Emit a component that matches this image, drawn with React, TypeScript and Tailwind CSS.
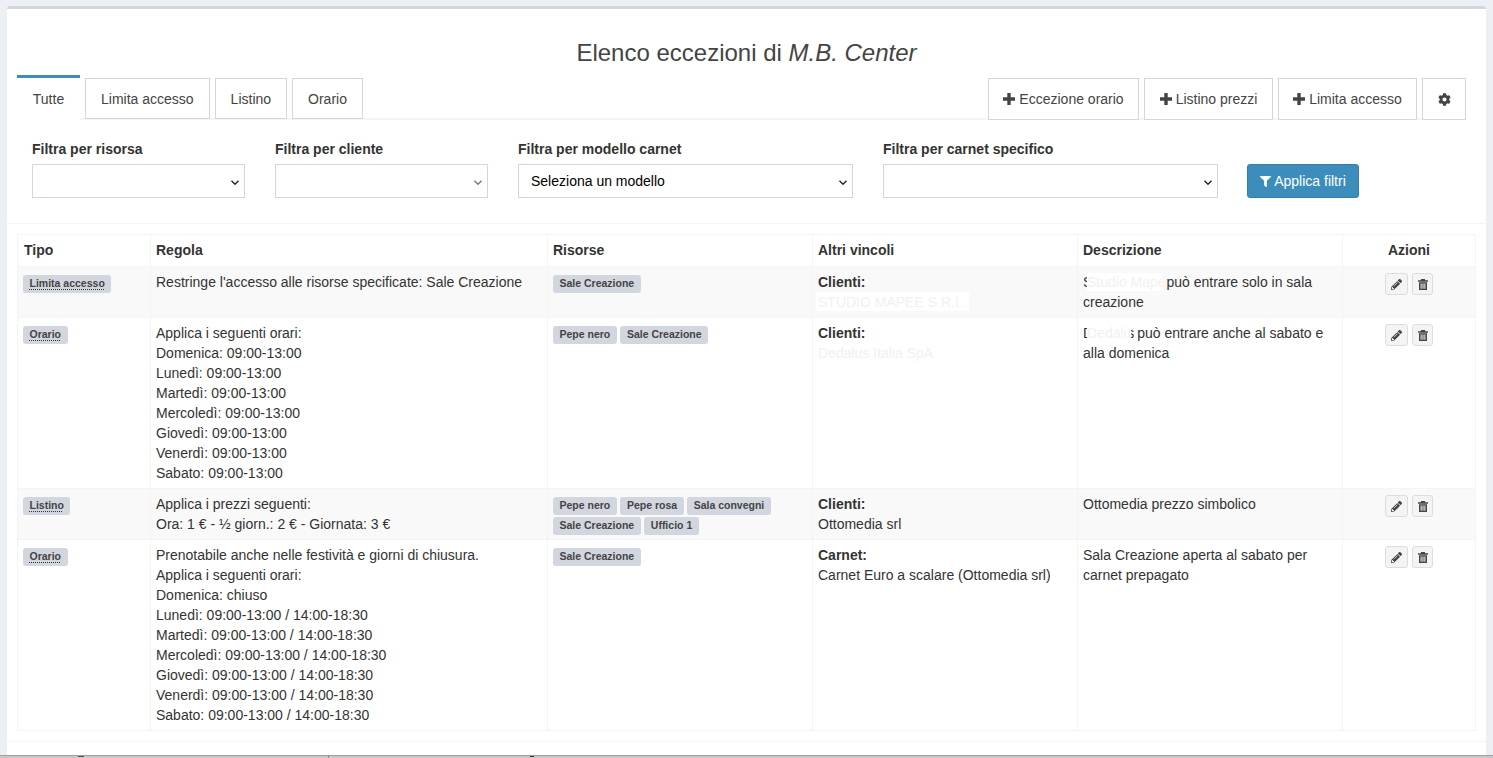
import React from "react";
import { FaCog, FaFilter, FaPencilAlt } from "react-icons/fa";

const Plus = () => (
  <svg viewBox="0 0 12 12" className="size-[12px] shrink-0 fill-current">
    <path d="M4.3 0h3.4v4.3H12v3.4H7.7V12H4.3V7.7H0V4.3h4.3z" />
  </svg>
);

const Trash = () => (
  <svg viewBox="0 0 10 11" className="h-[11px] w-[10px] fill-current">
    <path
      fillRule="evenodd"
      d="M3.2 0h3.6l.5 1.2H10v1.5H0V1.2h2.7zM1 3.3h8V11H1zM2.6 4.5v5.3h1V4.5zM4.5 4.5v5.3h1V4.5zM6.4 4.5v5.3h1V4.5z"
    />
  </svg>
);

const Tag = ({ children, abbr }: { children: React.ReactNode; abbr?: boolean }) => (
  <span className="inline-block h-[18px] rounded-[3px] bg-[#d2d6de] px-[6.5px] text-[10.5px] font-bold leading-[17px] text-[#444]">
    <span className={abbr ? "underline decoration-dotted decoration-[#333] underline-offset-2" : ""}>{children}</span>
  </span>
);

const Tags = ({ items }: { items: string[] }) => (
  <div className="-mb-[1px] flex w-[240px] flex-wrap gap-x-[3.6px] gap-y-[2px] pt-[3px]">
    {items.map((t) => (
      <Tag key={t}>{t}</Tag>
    ))}
  </div>
);

const Actions = () => (
  <div className="flex justify-center gap-[4px] pt-[1px]">
    <button className="flex h-[22px] w-[23px] items-center justify-center rounded-[3px] border border-[#ddd] bg-[#f4f4f4] text-[#444]">
      <FaPencilAlt className="size-[11px]" />
    </button>
    <button className="flex h-[22px] w-[21px] items-center justify-center rounded-[3px] border border-[#ddd] bg-[#f4f4f4] text-[#444]">
      <Trash />
    </button>
  </div>
);

const Lines = ({ lines }: { lines: string[] }) => (
  <>
    {lines.map((l) => (
      <div key={l}>{l}</div>
    ))}
  </>
);

const Masked = ({ word, mask, width, gap }: { word: string; mask: string; width: string; gap: string }) => (
  <span className={`relative ${gap}`}>
    {word}
    <span className={`absolute left-[4px] top-[-1px] h-[18px] overflow-hidden whitespace-nowrap bg-white leading-[18px] text-[#f1f1f1] ${width}`}>
      {mask}
    </span>
  </span>
);

const Select = ({ width, children, muted, value }: { width: string; children?: React.ReactNode; muted?: boolean; value: string }) => (
  <div className={`relative h-[34px] ${width}`}>
    <select
      className="block h-[34px] w-full appearance-none border border-[#d2d6de] bg-white px-[12px] text-[14px] text-black"
      defaultValue={value}
    >
      {children}
    </select>
    <svg
      viewBox="0 0 8 5"
      className={`pointer-events-none absolute right-[6px] top-[16px] h-[5px] w-[8px] fill-none stroke-[1.4] ${muted ? "stroke-[#777]" : "stroke-[#222]"}`}
    >
      <path d="M.5.7 4 4.2 7.5.7" />
    </svg>
  </div>
);

const td = "border border-[#f4f4f4] p-[5px] align-top";
const th = "border border-[#f4f4f4] px-[5px] pb-[5px] pt-[5px] align-top font-bold";

const tabClass = "-mb-[1px] flex h-[41px] items-center border border-[#d2d6de] bg-white px-[15px] pt-[1px] text-[#444]";
const actionClass = "-mb-[2px] flex h-[42px] items-center justify-center gap-[4px] border border-[#d2d6de] bg-white text-[#444]";
const labelClass = "mb-[5px] block h-[20px] font-bold leading-[20px]";

export default function App() {
  return (
    <div className="flex h-[758px] flex-col overflow-hidden bg-[#ecf0f5] font-['Liberation_Sans',Arial,sans-serif] text-[14px] leading-[20px] text-[#333]">
      <div className="mx-[7px] mt-[6px] h-[749px] w-[1479px] rounded-t-[3px] border-t-[3px] border-[#d2d6de] bg-white">
        <h1 className="h-[66px] pt-[30px] text-center text-[24px] leading-[28px] text-[#444]">
          Elenco eccezioni di <em>M.B. Center</em>
        </h1>

        <div className="mx-[10px] flex h-[45px] w-[1449px] items-end justify-between border-b-2 border-[#f4f4f4]">
          <div className="flex items-end gap-[5px]">
            <div className="-mb-[2px] flex h-[45px] w-[63px] items-center justify-center border-t-[3px] border-[#3c8dbc] bg-white text-[#444]">
              Tutte
            </div>
            <div className={tabClass}>Limita accesso</div>
            <div className={tabClass}>Listino</div>
            <div className={tabClass}>Orario</div>
          </div>
          <div className="flex items-end gap-[5px]">
            <div className={`${actionClass} w-[151px]`}>
              <Plus /> Eccezione orario
            </div>
            <div className={`${actionClass} w-[129px]`}>
              <Plus /> Listino prezzi
            </div>
            <div className={`${actionClass} w-[139px]`}>
              <Plus /> Limita accesso
            </div>
            <div className={`${actionClass} w-[44px]`}>
              <FaCog className="size-[13px]" />
            </div>
          </div>
        </div>

        <div className="flex h-[104px] items-start border-b border-[#f4f4f4] pl-[25px] pt-[19px]">
          <div className="mr-[30px] w-[213px]">
            <label className={labelClass}>Filtra per risorsa</label>
            <Select width="w-[213px]" value="" />
          </div>
          <div className="mr-[30px] w-[213px]">
            <label className={labelClass}>Filtra per cliente</label>
            <Select width="w-[213px]" value="" muted />
          </div>
          <div className="mr-[30px] w-[335px]">
            <label className={labelClass}>Filtra per modello carnet</label>
            <Select width="w-[335px]" value="m">
              <option value="m">Seleziona un modello</option>
            </Select>
          </div>
          <div className="mr-[29px] w-[335px]">
            <label className={labelClass}>Filtra per carnet specifico</label>
            <Select width="w-[335px]" value="" />
          </div>
          <button className="mt-[25px] flex h-[34px] w-[112px] items-center justify-center gap-[3px] rounded-[3px] border border-[#367fa9] bg-[#3c8dbc] text-white">
            <FaFilter className="size-[11px]" /> Applica filtri
          </button>
        </div>

        <div className="h-[518px] border-b border-[#f4f4f4] pl-[10px] pt-[10px]">
          <table className="w-[1458px] table-fixed border-collapse">
            <colgroup>
              <col className="w-[133px]" />
              <col className="w-[397px]" />
              <col className="w-[265px]" />
              <col className="w-[265px]" />
              <col className="w-[265px]" />
              <col className="w-[133px]" />
            </colgroup>
            <thead>
              <tr className="h-[32px]">
                <th className={`${th} pl-[6px] text-left`}>Tipo</th>
                <th className={`${th} text-left`}>Regola</th>
                <th className={`${th} text-left`}>Risorse</th>
                <th className={`${th} text-left`}>Altri vincoli</th>
                <th className={`${th} text-left`}>Descrizione</th>
                <th className={`${th} text-center`}>Azioni</th>
              </tr>
            </thead>
            <tbody>
              <tr className="bg-[#f9f9f9]">
                <td className={td}>
                  <Tag abbr>Limita accesso</Tag>
                </td>
                <td className={td}>Restringe l'accesso alle risorse specificate: Sale Creazione</td>
                <td className={td}>
                  <Tags items={["Sale Creazione"]} />
                </td>
                <td className={td}>
                  <b>Clienti:</b>
                  <div>
                    <span className="inline-block h-[19px] -translate-x-[2px] bg-white px-[2px] text-[#f1f1f1]">STUDIO MAPEE S.R.L.</span>
                  </div>
                </td>
                <td className={td}>
                  <Masked word="Studio Mape" mask="Studio Mape" width="w-[75px]" gap="mr-[1px]" /> può entrare solo in sala creazione
                </td>
                <td className={td}>
                  <Actions />
                </td>
              </tr>
              <tr>
                <td className={td}>
                  <Tag abbr>Orario</Tag>
                </td>
                <td className={td}>
                  <Lines
                    lines={[
                      "Applica i seguenti orari:",
                      "Domenica: 09:00-13:00",
                      "Lunedì: 09:00-13:00",
                      "Martedì: 09:00-13:00",
                      "Mercoledì: 09:00-13:00",
                      "Giovedì: 09:00-13:00",
                      "Venerdì: 09:00-13:00",
                      "Sabato: 09:00-13:00",
                    ]}
                  />
                </td>
                <td className={td}>
                  <Tags items={["Pepe nero", "Sale Creazione"]} />
                </td>
                <td className={td}>
                  <b>Clienti:</b>
                  <div className="text-[#f1f1f1]">Dedalus Italia SpA</div>
                </td>
                <td className={td}>
                  <Masked word="Dedalus" mask="Dedalus" width="w-[44px]" gap="-mr-[1px]" /> può entrare anche al sabato e alla domenica
                </td>
                <td className={td}>
                  <Actions />
                </td>
              </tr>
              <tr className="bg-[#f9f9f9]">
                <td className={td}>
                  <Tag abbr>Listino</Tag>
                </td>
                <td className={td}>
                  <Lines lines={["Applica i prezzi seguenti:", "Ora: 1 € - ½ giorn.: 2 € - Giornata: 3 €"]} />
                </td>
                <td className={td}>
                  <Tags items={["Pepe nero", "Pepe rosa", "Sala convegni", "Sale Creazione", "Ufficio 1"]} />
                </td>
                <td className={td}>
                  <b>Clienti:</b>
                  <div>Ottomedia srl</div>
                </td>
                <td className={td}>Ottomedia prezzo simbolico</td>
                <td className={td}>
                  <Actions />
                </td>
              </tr>
              <tr>
                <td className={td}>
                  <Tag abbr>Orario</Tag>
                </td>
                <td className={td}>
                  <Lines
                    lines={[
                      "Prenotabile anche nelle festività e giorni di chiusura.",
                      "Applica i seguenti orari:",
                      "Domenica: chiuso",
                      "Lunedì: 09:00-13:00 / 14:00-18:30",
                      "Martedì: 09:00-13:00 / 14:00-18:30",
                      "Mercoledì: 09:00-13:00 / 14:00-18:30",
                      "Giovedì: 09:00-13:00 / 14:00-18:30",
                      "Venerdì: 09:00-13:00 / 14:00-18:30",
                      "Sabato: 09:00-13:00 / 14:00-18:30",
                    ]}
                  />
                </td>
                <td className={td}>
                  <Tags items={["Sale Creazione"]} />
                </td>
                <td className={td}>
                  <b>Carnet:</b>
                  <div>Carnet Euro a scalare (Ottomedia srl)</div>
                </td>
                <td className={td}>Sala Creazione aperta al sabato per carnet prepagato</td>
                <td className={td}>
                  <Actions />
                </td>
              </tr>
            </tbody>
          </table>
        </div>
      </div>
      <div className="flex h-[3px] w-full items-start border-t border-[#a0a0a0] bg-[#c8c8c8]">
        <div className="ml-[78px] h-[1px] w-[6px] bg-[#555]" />
        <div className="ml-[244px] h-[1px] w-[1px] bg-[#555]" />
        <div className="ml-[201px] h-[1px] w-[4px] bg-[#333]" />
      </div>
    </div>
  );
}
